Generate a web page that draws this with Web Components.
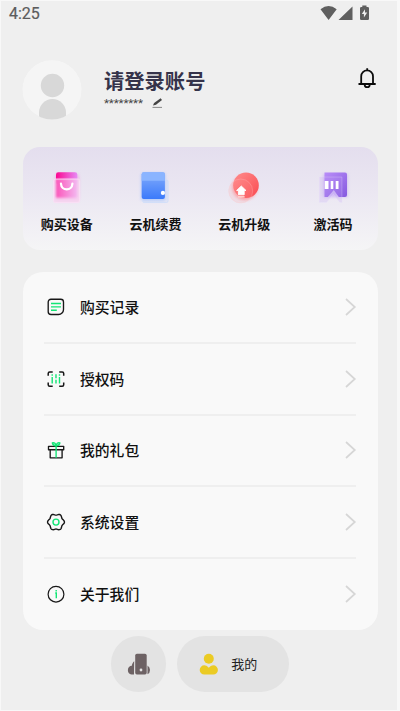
<!DOCTYPE html>
<html lang="zh-CN">
<head>
<meta charset="utf-8">
<title>我的</title>
<style>
html,body{margin:0;height:100%;overflow:hidden;background:#efefef}
body{font-family:"Noto Sans CJK SC",sans-serif}
</style>
</head>
<body>
<profile-page></profile-page>
<script>
const define = (name, css, html) => customElements.define(name, class extends HTMLElement {
  constructor() {
    super();
    this.attachShadow({ mode: 'open' }).innerHTML = `<style>:host,*{box-sizing:border-box}svg{display:block;overflow:visible}${css}</style>${html}`;
  }
});

// Six-lobed outline of the settings gear.
const gearPath = 'M' + Array.from({ length: 72 }, (_, i) => {
  const t = i * Math.PI / 36, r = 7.7 + .75 * Math.cos(6 * t);
  return (9 + r * Math.cos(t)).toFixed(2) + ' ' + (9.1 + r * Math.sin(t)).toFixed(2);
}).join('L') + 'z';

const icons = {
  bag: `<svg width="60" height="50" viewBox="-3 0 60 50"><defs>
    <linearGradient id="a"><stop stop-color="#fb0790"/><stop offset="1" stop-color="#e78af5"/></linearGradient>
    <linearGradient id="b"><stop stop-color="#fb4bb5"/><stop offset="1" stop-color="#f3b3f0"/></linearGradient>
    <filter id="f" x="-50%" y="-50%" width="200%" height="200%"><feGaussianBlur stdDeviation="1.8"/></filter>
    <filter id="g"><feGaussianBlur stdDeviation=".9"/></filter></defs>
    <rect x="15" y="14" width="24" height="27" rx="3" fill="#f78bdc" opacity=".5" filter="url(#f)"/>
    <rect x="16" y="12.3" width="21.3" height="12" rx="2.3" fill="url(#a)"/>
    <rect x="13.6" y="19" width="26" height="23.6" rx="1.5" fill="#f7d2ef" opacity=".75"/>
    <rect x="16" y="19" width="21" height="18.8" rx="1" fill="url(#b)" filter="url(#g)"/>
    <rect x="13.6" y="19" width="26" height="23.6" rx="1.5" fill="#fff" fill-opacity=".06" stroke="#fbe0f6" stroke-width=".8"/>
    <path d="M21 23.7c.4 7.6 11 7.6 11.4 0" fill="none" stroke="#fff" stroke-width="2.3" stroke-linecap="round"/></svg>`,
  wallet: `<svg width="60" height="50" viewBox="-.7 0 60 50"><defs>
    <linearGradient id="a" x2="0" y2="1"><stop stop-color="#83acfb"/><stop offset="1" stop-color="#3b7afb"/></linearGradient>
    <filter id="f" x="-50%" y="-50%" width="200%" height="200%"><feGaussianBlur stdDeviation="1.6"/></filter></defs>
    <rect x="14.500" y="13" width="24" height="27.500" rx="2" fill="#80acff" opacity=".55" filter="url(#f)"/>
    <rect x="16" y="20" width="25.400" height="22.500" rx="1.500" fill="#bdd2fa" fill-opacity=".25" stroke="#ccdcfa" stroke-width=".7"/>
    <rect x="15" y="12.300" width="23.200" height="26.700" rx="2" fill="url(#a)"/>
    <path d="M15 20.800h23.200V14.300a2 2 0 0 0-2-2H17a2 2 0 0 0-2 2z" fill="#8ab4ff"/>
    <circle cx="36.200" cy="32.900" r="2.100" fill="#fff"/></svg>`,
  upgrade: `<svg width="60" height="50" viewBox="-5.300 0 60 50"><defs>
    <linearGradient id="a" x2="1" y2="1"><stop stop-color="#ff8d8d"/><stop offset="1" stop-color="#fa4a50"/></linearGradient>
    <filter id="f" x="-50%" y="-50%" width="200%" height="200%"><feGaussianBlur stdDeviation="1.500"/></filter></defs>
    <circle cx="25.500" cy="27.500" r="12.500" fill="#ff8b91" opacity=".7" filter="url(#f)"/>
    <circle cx="26.700" cy="25.300" r="12.800" fill="url(#a)"/>
    <circle cx="21.400" cy="31" r="12" fill="#ff9a9a" fill-opacity=".16" stroke="#ffc2c2" stroke-opacity=".4" stroke-width=".7"/>
    <path d="M22 26l4.700 4.500h-1.800v4.300h-5.800v-4.300h-1.800z" fill="#fff" stroke="#fff" stroke-width=".9" stroke-linejoin="round"/>
    <path d="M18.700 36.800h6.600" stroke="#ffd2cf" stroke-width="1.500"/></svg>`,
  ticket: `<svg width="60" height="50" viewBox="-3.500 0 60 50"><defs>
    <linearGradient id="a" x2="1" y2="1"><stop stop-color="#b98df8"/><stop offset="1" stop-color="#8559df"/></linearGradient>
    <filter id="f" x="-50%" y="-50%" width="200%" height="200%"><feGaussianBlur stdDeviation="1.500"/></filter></defs>
    <path d="M17 14h24v23H17z" fill="#b28cf6" opacity=".5" filter="url(#f)"/>
    <path d="M18 12.600h20.500a2 2 0 0 1 2 2v20.500a2 2 0 0 1-2 2h-6.200l-5-7-6 7H18z" fill="url(#a)"/>
    <path d="M13 17h22.400v25.300h-2l-6.600-8-6.800 8h-7z" fill="#bc9df4" fill-opacity=".2" stroke="#e4d8fb" stroke-opacity=".5" stroke-width=".6"/>
    <path d="M18.200 21h3.800v8h-3.800zm6 0h2.600v8h-2.600zm5 0H32v8h-2.800z" fill="#fff"/></svg>`,
  note: `<svg width="18" height="18" viewBox="0 0 18 18" fill="none" stroke="#181818" stroke-width="1.350"><path d="M4 1.200h9.700a2.800 2.800 0 0 1 2.800 2.800v7.500a5 5 0 0 1-5 5H4a2.800 2.800 0 0 1-2.800-2.800V4A2.800 2.800 0 0 1 4 1.200z"/><path d="M4 5.500h10M4 8.800h10M4 12.200h5.800" stroke="#12e675"/></svg>`,
  scan: `<svg width="18" height="18" viewBox="0 0 18 18" fill="none" stroke="#181818" stroke-width="1.500"><path d="M5.700 1.900h-3a1.500 1.500 0 0 0-1.500 1.500v2.300M12.200 1.900h3a1.500 1.500 0 0 1 1.500 1.500v2.300M5.700 16.200h-3a1.500 1.500 0 0 1-1.500-1.500v-2.300M12.200 16.200h3a1.500 1.500 0 0 0 1.500-1.500v-2.300"/><path d="M5.200 4.200v1.500m0 1.300v6.600M9 4.200v4m0 1.600v3.800M12.500 4.200v1.500m0 1.300v6.600" stroke="#12e675" stroke-width="1.400"/></svg>`,
  gift: `<svg width="18" height="18" viewBox="0 0 18 18" fill="none" stroke="#181818" stroke-width="1.350" stroke-linejoin="round"><path d="M1.500 5.300h15.200v3.400H1.500zM3.200 8.700v8.100h11.900V8.700"/><path d="M9.100 16.700V4.900C7 4.500 5.500 3.500 5.300 1.800c2.200-.6 3.500 1 3.800 3.100.3-2.100 1.600-3.700 3.800-3.100-.2 1.700-1.700 2.700-3.800 3.100" stroke="#12e675"/></svg>`,
  gear: `<svg width="18" height="18" viewBox="0 0 18 18" fill="none" stroke="#181818" stroke-width="1.400" stroke-linejoin="round"><path d="${gearPath}"/><circle cx="9" cy="9.100" r="3" stroke="#12e675"/></svg>`,
  info: `<svg width="18" height="18" viewBox="0 0 18 18" fill="none"><circle cx="9" cy="9.200" r="7.900" stroke="#181818" stroke-width="1.200"/><path d="M8.200 8h1.100v5.200M9.200 5v1.600" stroke="#12e675" stroke-width="1.400"/></svg>`
};

customElements.define('app-icon', class extends HTMLElement {
  connectedCallback() {
    if (!this.shadowRoot) this.attachShadow({ mode: 'open' }).innerHTML =
      `<style>:host{display:block;flex:none}svg{display:block;overflow:visible}</style>${icons[this.getAttribute('name')]}`;
  }
});

define('status-bar', `:host{display:flex;justify-content:space-between;height:28px;padding:5px 30px 0 9px;color:#5c5c5c;font:400 16px/18px Roboto,sans-serif;-webkit-text-stroke:.2px #5c5c5c}`,
`<span><slot></slot></span>
<svg width="50" height="18" viewBox="0 0 50 18" fill="#5f5f5f"><path d="M.5 4.300Q8.600-2.200 16.700 4.300L8.600 15zM32.500 1.400V15H18.500zM42.300 1.900V.6h4.200v1.300h1.200q1.300 0 1.300 1.300v10.500q0 1.300-1.300 1.300h-6.400q-1.300 0-1.300-1.300V3.200q0-1.300 1.300-1.300z"/><path d="M45 4.200v3.300h2.200L43.900 12.500V9h-2.100z" fill="#efefef"/></svg>`);

define('user-header', `:host{display:flex;height:119px;padding:32px 22px 0 22px}
.who{margin-left:22px;flex:1}h1{margin:6px 0 0;font:700 20.300px/28px "Noto Sans CJK SC",sans-serif;color:#35334a}
.id{display:flex;align-items:center;gap:9px;height:18px;color:#444;font:11.500px/18px Roboto,sans-serif;letter-spacing:-.1px}
.bell{margin-top:7px}`,
`<svg width="60" height="60" viewBox="0 0 60 60"><clipPath id="c"><circle cx="30" cy="29.700" r="29.700"/></clipPath><g clip-path="url(#c)"><circle cx="30" cy="29.700" r="29.700" fill="#f5f5f5"/><circle cx="30.500" cy="25.500" r="11.700" fill="#d8d8d8"/><path d="M17 70V52.500a13.500 13.500 0 0 1 27 0V70z" fill="#d8d8d8"/></g></svg>
<div class="who"><h1><slot></slot></h1><div class="id"><span><slot name="id"></slot></span><svg width="11" height="10" viewBox="0 0 11 10"><path d="M1 7.500L2.100 5 8.600.3 10 2 4 6.700z" fill="#444"/><path d="M.5 9.400h9.500" stroke="#888"/></svg></div></div>
<svg class="bell" width="22" height="24" viewBox="0 .3 22 24" fill="none" stroke="#0b0b0b" stroke-width="1.800"><path d="M5.200 17.200V9.500a5.900 5.900 0 0 1 11.800 0v7.700M2.500 17.300h17.200M8.700 18a2.500 2.500 0 0 0 5 0M11.200 1.500v2.300"/></svg>`);

define('feature-card', `:host{display:grid;grid-template-columns:repeat(4,1fr);height:102.500px;margin:0 22.500px;border-radius:17px;background:linear-gradient(#e4deee,#ebe7f2 45%,#f5f5f6)}`, `<slot></slot>`);
define('feature-item', `:host{display:flex;flex-direction:column;align-items:center;padding-top:13px;color:#111;font-weight:700;font-size:13px;line-height:20px}span{margin-top:3.500px}`,
`<slot name="icon"></slot><span><slot></slot></span>`);

define('menu-card', `:host{display:block;height:358px;margin:22.500px 22px 0 22.500px;padding:0 22px 0 21.500px;border-radius:20px;background:#f9f9f9}`, `<slot></slot>`);
define('menu-item', `:host{display:flex;align-items:center;height:71.800px;border-bottom:2px solid #efefef;padding-left:2.500px;color:#111;font-weight:500;font-size:14.800px;line-height:24px}:host(:last-child){border-color:transparent}span{flex:1;margin:0 0 0 15.500px}`,
`<slot name="icon"></slot><span><slot></slot></span><svg width="12" height="18" viewBox="0 0 12 18" fill="none" stroke="#d6d6d6" stroke-width="1.700"><path d="M2 1l8.800 8L2 17"/></svg>`);

define('tab-bar', `:host{display:flex;gap:11px;padding:6px 0 0 110.800px;height:62px}.home,.me{height:56px;border-radius:28px;background:#e3e3e3;display:flex;align-items:center}.home{width:55.500px;justify-content:center}.me{width:111.700px;padding-left:22px;gap:12px;font-size:13px;line-height:20px;color:#222}`,
`<div class="home"><svg width="24" height="22" viewBox="0 0 24 22"><path d="M7 21.500H6C2 21.500.9 19.600.9 17s1.700-4.200 3.900-4.200C5 11 6 9 7.200 8.200zM20.500 12.500Q23 14 23 17T20.500 21.300z" fill="#6d6264"/><rect x="8.200" y=".8" width="11.500" height="20.700" rx="1.700" fill="#6d6264"/><circle cx="14" cy="17" r="1.400" fill="#e3e3e3"/></svg></div>
<div class="me"><svg width="20" height="22" viewBox="0 0 20 22" fill="#ebcb24"><circle cx="9.800" cy="5.700" r="5"/><path d="M5.300 12.300c1.600 0 2.500.7 4.500 2.500 2-1.800 2.900-2.500 4.500-2.500a4.600 4.600 0 0 1 0 9.200h-9a4.600 4.600 0 0 1 0-9.200z"/></svg><span><slot></slot></span></div>`);

define('profile-page', `:host{display:block;width:400px;height:711px;border:solid #f8f8f8;border-width:1px 3px 1px 1px;background:#efefef;overflow:hidden}.body{margin:-1px -3px -1px -1px}`,
`<div class="body"><status-bar>4:25</status-bar>
<user-header>请登录账号<span slot="id">********</span></user-header>
<feature-card>
<feature-item><app-icon slot="icon" name="bag"></app-icon>购买设备</feature-item>
<feature-item><app-icon slot="icon" name="wallet"></app-icon>云机续费</feature-item>
<feature-item><app-icon slot="icon" name="upgrade"></app-icon>云机升级</feature-item>
<feature-item><app-icon slot="icon" name="ticket"></app-icon>激活码</feature-item>
</feature-card>
<menu-card>
<menu-item><app-icon slot="icon" name="note"></app-icon>购买记录</menu-item>
<menu-item><app-icon slot="icon" name="scan"></app-icon>授权码</menu-item>
<menu-item><app-icon slot="icon" name="gift"></app-icon>我的礼包</menu-item>
<menu-item><app-icon slot="icon" name="gear"></app-icon>系统设置</menu-item>
<menu-item><app-icon slot="icon" name="info"></app-icon>关于我们</menu-item>
</menu-card>
<tab-bar>我的</tab-bar></div>`);
</script>
</body>
</html>
